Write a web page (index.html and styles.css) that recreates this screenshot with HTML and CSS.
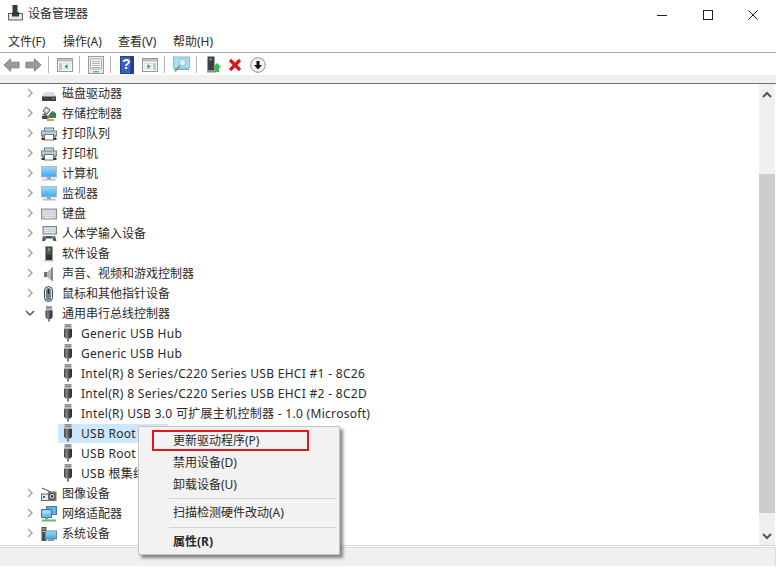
FILE: index.html
```html
<!DOCTYPE html>
<html lang="zh-CN">
<head>
<meta charset="utf-8">
<title>设备管理器</title>
<link rel="stylesheet" href="styles.css">
</head>
<body>
<svg class="defs" width="0" height="0" aria-hidden="true">
  <defs>
    <linearGradient id="plug-g" x1="0" x2="1" y1="0" y2="0"><stop offset="0" stop-color="#3d3d3d"/><stop offset=".35" stop-color="#8c8c8c"/><stop offset=".6" stop-color="#4a4a4a"/><stop offset="1" stop-color="#2f2f2f"/></linearGradient>
    <linearGradient id="screen-g" x1="0" x2="0" y1="0" y2="1"><stop offset="0" stop-color="#9fdcfb"/><stop offset="1" stop-color="#3fa4ea"/></linearGradient>
    <symbol id="chev" viewBox="0 0 10 10"><path d="M3 1l4 4-4 4" fill="none" stroke="#a6a6a6" stroke-width="1.5"/></symbol>
    <symbol id="chevd" viewBox="0 0 10 10"><path d="M1 3l4 4 4-4" fill="none" stroke="#555" stroke-width="1.5"/></symbol>
    <symbol id="usb" viewBox="0 0 10 18"><rect x="2" y="0.500" width="6" height="4.500" fill="#c9c9c9" stroke="#777" stroke-width=".7"/><rect x="3.300" y="1.500" width="1.200" height="1.500" fill="#444"/><rect x="5.500" y="1.500" width="1.200" height="1.500" fill="#444"/><path d="M1 5h8v7.500L7.500 14.500h-5L1 12.500z" fill="url(#plug-g)"/><rect x="4" y="14.500" width="2" height="3" fill="#777"/></symbol>
    <symbol id="disk" viewBox="0 0 16 16"><path d="M3.500 6h9l2.500 4v5H1v-5z" fill="#dcdcdc"/><rect x="1" y="10.500" width="14" height="4.500" fill="#3f3f3f"/><rect x="11.500" y="12" width="2" height="1.200" fill="#5fd15f"/></symbol>
    <symbol id="storage" viewBox="0 0 16 16"><path d="M5 1l4 3-3 4-4-3z" fill="#ddd" stroke="#555"/><path d="M1 8l5 5 8-3V6l-3-1-4 5-3-3z" fill="#5b7d63"/><rect x="9" y="7" width="6" height="5" fill="#3f7d4e"/><rect x="6" y="13" width="7" height="2" fill="#c9a227"/><rect x="1" y="10" width="5" height="3" fill="#444"/></symbol>
    <symbol id="printer" viewBox="0 0 16 16"><rect x="3.500" y="2" width="9" height="3.500" fill="#bfe0f7" stroke="#4f7fa3"/><rect x="0.500" y="5" width="15" height="5" fill="#c4c8cb" stroke="#7d8488"/><rect x="1" y="9" width="14" height="3.500" fill="#8e9397"/><rect x="3.500" y="8.500" width="9" height="5.500" fill="#fff" stroke="#777"/><rect x="0.500" y="12" width="3" height="2" fill="#333"/><rect x="12.500" y="12" width="3" height="2" fill="#333"/></symbol>
    <symbol id="monitor" viewBox="0 0 16 16"><rect x="0.500" y="0.500" width="15" height="10.500" fill="url(#screen-g)" stroke="#a9bcc9"/><rect x="6" y="11" width="4" height="2" fill="#9aa5ad"/><rect x="1.500" y="13" width="13" height="1.500" fill="#b5bdc3"/></symbol>
    <symbol id="keyboard" viewBox="0 0 16 16"><rect x="0.500" y="3" width="15" height="10" fill="#c9cfd4" stroke="#8b9298"/><path d="M2 5.500h12M2 7.500h12M2 9.500h12" stroke="#eef1f3" stroke-width="1" stroke-dasharray="1 .6"/><rect x="4" y="11" width="8" height="1" fill="#f2f2f2"/></symbol>
    <symbol id="hid" viewBox="0 0 16 16"><rect x="2" y="0.500" width="13.500" height="7.500" fill="#c9cfd4" stroke="#7c8288"/><path d="M3 2.500h11M3 4.500h11M3 6.500h11" stroke="#f1f3f5" stroke-dasharray="1 .6"/><path d="M1 15l1-5h12l1.500 5h-3l-1-2.500H5L4 15z" fill="#4d5359"/><circle cx="4" cy="11" r="1" fill="#7fa6c9"/><circle cx="12" cy="11" r="1" fill="#7fa6c9"/></symbol>
    <symbol id="soft" viewBox="0 0 16 16"><rect x="4.500" y="0.500" width="7" height="13.500" fill="#333"/><rect x="5.500" y="1.500" width="5" height="7" fill="#5a5a5a"/><rect x="7" y="2.500" width="2" height="2" fill="#4fd84f"/><rect x="3.500" y="14" width="9" height="1.500" fill="#bbb"/></symbol>
    <symbol id="sound" viewBox="0 0 16 16"><path d="M3 6h3v5H3z" fill="#6c7479"/><path d="M6 6l6-5v15l-6-5z" fill="#b1b8bd"/><path d="M10 2.500l2-1.500v14l-2-1.500z" fill="#7f878c"/></symbol>
    <symbol id="mouse" viewBox="0 0 16 16"><rect x="3.500" y="0.500" width="8" height="15" rx="4" fill="#e7e9eb" stroke="#3e4347"/><rect x="5" y="2" width="5" height="12.500" rx="2.500" fill="#6f8296"/><rect x="6.800" y="3" width="1.400" height="5" rx=".7" fill="#23282d"/></symbol>
    <symbol id="camera" viewBox="0 0 16 16"><path d="M1 2l9 4" stroke="#444"/><rect x="0.500" y="8" width="7" height="6.500" fill="#e9e9e9" stroke="#666"/><rect x="7" y="5.500" width="8.500" height="9.500" fill="#777"/><circle cx="11.200" cy="10.300" r="3" fill="#ddd" stroke="#333"/><circle cx="11.200" cy="10.300" r="1.200" fill="#333"/><rect x="2" y="10" width="2" height="2" fill="#555"/></symbol>
    <symbol id="net" viewBox="0 0 16 16"><rect x="5.500" y="0.500" width="10" height="8" fill="#5db3e8" stroke="#4a7c9e"/><rect x="0.500" y="3.500" width="10" height="8" fill="#6cc0ee" stroke="#4a7c9e"/><rect x="1.500" y="4.500" width="8" height="3" fill="#a5dcf8"/><path d="M5.500 11.500v2" stroke="#47b04c" stroke-width="2.500"/><rect x="1" y="13.500" width="14" height="2" fill="#5bc25f"/></symbol>
    <symbol id="sys" viewBox="0 0 16 16"><rect x="0.500" y="1" width="5" height="14" fill="#4a4f53"/><rect x="1.500" y="2.500" width="3" height="1" fill="#c6c6c6"/><rect x="1.500" y="5" width="3" height="1" fill="#c6c6c6"/><rect x="4.500" y="5" width="11" height="8" fill="url(#screen-g)" stroke="#6d8ba0"/><rect x="7" y="13" width="6" height="2" fill="#8f989e"/></symbol>
    <symbol id="back" viewBox="0 0 18 16"><path d="M1 8l7-6.500V5h9v6H8v3.500z" fill="#9a9a9a" stroke="#808080"/></symbol>
    <symbol id="fwd" viewBox="0 0 18 16"><path d="M17 8l-7-6.500V5H1v6h9v3.500z" fill="#9a9a9a" stroke="#808080"/></symbol>
    <symbol id="pane-l" viewBox="0 0 16 16"><rect x="0.500" y="1.500" width="15" height="13" fill="#f4f4f4" stroke="#9a9a9a"/><rect x="1" y="2" width="14" height="2.500" fill="#bfbfbf"/><path d="M2 6h3v7H2z" fill="#c7c7c7"/><path d="M6 6.500h8M6 9h8M6 11.500h8" stroke="#ddd"/><path d="M10.500 7v5L7.500 9.500z" fill="#35a045"/></symbol>
    <symbol id="pane-r" viewBox="0 0 16 16"><rect x="0.500" y="1.500" width="15" height="13" fill="#f4f4f4" stroke="#9a9a9a"/><rect x="1" y="2" width="14" height="2.500" fill="#bfbfbf"/><path d="M11 6h3v7h-3z" fill="#c7c7c7"/><path d="M2 6.500h8M2 9h8M2 11.500h8" stroke="#ddd"/><path d="M5.500 7v5l3-2.500z" fill="#35a045"/></symbol>
    <symbol id="prop" viewBox="0 0 16 18"><rect x="0.500" y="0.500" width="15" height="17" fill="#ececec" stroke="#9a9a9a"/><rect x="2.500" y="3" width="11" height="10" fill="#fff" stroke="#aaa"/><path d="M4 5.500h8M4 7.500h8M4 9.500h8M4 11.500h8" stroke="#aaa"/><rect x="5" y="15" width="6" height="1.500" fill="#49b0d8"/></symbol>
    <symbol id="help" viewBox="0 0 14 18"><rect x="0.500" y="0.500" width="13" height="17" fill="#3b5fc4" stroke="#26408f"/><rect x="10.500" y="1" width="3" height="16" fill="#233b8a"/></symbol>
    <symbol id="scan" viewBox="0 0 17 17"><rect x="0.500" y="0.500" width="16" height="11" fill="#a9ddf7" stroke="#86bcd9"/><rect x="1" y="12" width="15" height="1.500" fill="#54b7e2"/><circle cx="9.500" cy="6" r="3.500" fill="#d9f1fb" stroke="#9fb4c2"/><path d="M7 9l-5 6" stroke="#8f8a7e" stroke-width="1.500"/></symbol>
    <symbol id="update" viewBox="0 0 15 18"><rect x="0.500" y="0.500" width="7" height="14" fill="#3d3d3d"/><rect x="2.500" y="2.500" width="2" height="2" fill="#4fd84f"/><rect x="0" y="14.500" width="9" height="2" fill="#888"/><path d="M10 7l4.500 4.500H12V16H8v-4.500H5.500z" fill="#2fbf55"/></symbol>
    <symbol id="remove" viewBox="0 0 14 14"><path d="M2 2l10 10M12 2L2 12" stroke="#d9141b" stroke-width="3.200"/></symbol>
    <symbol id="down" viewBox="0 0 16 16"><circle cx="8" cy="8" r="7.300" fill="#f4f4f4" stroke="#8d8d8d"/><path d="M8 12.500L4 8h2.500V4h3v4H12z" fill="#111"/></symbol>
  </defs>
</svg>

<div class="window">
  <header class="titlebar">
    <svg class="title-icon" viewBox="0 0 15 16"><path d="M4.500 0h5v7h-5z" fill="#3a3a3a"/><path d="M0.500 8.500h14v6.500H.5z" fill="#e6e6e6" stroke="#5a5a5a"/><path d="M4 7h7v4.500H4z" fill="#3a3a3a"/></svg>
    <span class="title-text">设备管理器</span>
    <div class="controls">
      <span class="ctl"><svg width="12" height="12" viewBox="0 0 12 12"><path d="M1 6.500h10" stroke="#222"/></svg></span>
      <span class="ctl"><svg width="12" height="12" viewBox="0 0 12 12"><rect x="1.500" y="1.500" width="9" height="9" fill="none" stroke="#222"/></svg></span>
      <span class="ctl"><svg width="12" height="12" viewBox="0 0 12 12"><path d="M1.500 1.500l9 9M10.500 1.500l-9 9" stroke="#222"/></svg></span>
    </div>
  </header>

  <nav class="menubar">
    <span class="menu-item">文件(F)</span>
    <span class="menu-item">操作(A)</span>
    <span class="menu-item">查看(V)</span>
    <span class="menu-item">帮助(H)</span>
  </nav>

  <div class="toolbar">
    <svg class="tb w17"><use href="#back"/></svg>
    <svg class="tb w17 g5"><use href="#fwd"/></svg>
    <i class="sep"></i>
    <svg class="tb w16"><use href="#pane-l"/></svg>
    <i class="sep"></i>
    <svg class="tb w16"><use href="#prop"/></svg>
    <i class="sep"></i>
    <span class="help-wrap"><svg class="tb w14"><use href="#help"/></svg><b class="help-q">?</b></span>
    <svg class="tb w16 g8"><use href="#pane-r"/></svg>
    <i class="sep"></i>
    <svg class="tb w17"><use href="#scan"/></svg>
    <i class="sep"></i>
    <svg class="tb w15 g2"><use href="#update"/></svg>
    <svg class="tb w14 g6"><use href="#remove"/></svg>
    <svg class="tb w16 g8"><use href="#down"/></svg>
  </div>
  <div class="band"></div>

  <main class="main">
    <div class="tree">
      <div class="row"><svg class="chev"><use href="#chev"/></svg><svg class="ico"><use href="#disk"/></svg><span>磁盘驱动器</span></div>
      <div class="row"><svg class="chev"><use href="#chev"/></svg><svg class="ico"><use href="#storage"/></svg><span>存储控制器</span></div>
      <div class="row"><svg class="chev"><use href="#chev"/></svg><svg class="ico"><use href="#printer"/></svg><span>打印队列</span></div>
      <div class="row"><svg class="chev"><use href="#chev"/></svg><svg class="ico"><use href="#printer"/></svg><span>打印机</span></div>
      <div class="row"><svg class="chev"><use href="#chev"/></svg><svg class="ico"><use href="#monitor"/></svg><span>计算机</span></div>
      <div class="row"><svg class="chev"><use href="#chev"/></svg><svg class="ico"><use href="#monitor"/></svg><span>监视器</span></div>
      <div class="row"><svg class="chev"><use href="#chev"/></svg><svg class="ico"><use href="#keyboard"/></svg><span>键盘</span></div>
      <div class="row"><svg class="chev"><use href="#chev"/></svg><svg class="ico"><use href="#hid"/></svg><span>人体学输入设备</span></div>
      <div class="row"><svg class="chev"><use href="#chev"/></svg><svg class="ico"><use href="#soft"/></svg><span>软件设备</span></div>
      <div class="row"><svg class="chev"><use href="#chev"/></svg><svg class="ico"><use href="#sound"/></svg><span>声音、视频和游戏控制器</span></div>
      <div class="row"><svg class="chev"><use href="#chev"/></svg><svg class="ico"><use href="#mouse"/></svg><span>鼠标和其他指针设备</span></div>
      <div class="row"><svg class="chev"><use href="#chevd"/></svg><svg class="ico"><use href="#usb"/></svg><span>通用串行总线控制器</span></div>
      <div class="row child"><svg class="plug"><use href="#usb"/></svg><span>Generic USB Hub</span></div>
      <div class="row child"><svg class="plug"><use href="#usb"/></svg><span>Generic USB Hub</span></div>
      <div class="row child"><svg class="plug"><use href="#usb"/></svg><span>Intel(R) 8 Series/C220 Series USB EHCI #1 - 8C26</span></div>
      <div class="row child"><svg class="plug"><use href="#usb"/></svg><span>Intel(R) 8 Series/C220 Series USB EHCI #2 - 8C2D</span></div>
      <div class="row child"><svg class="plug"><use href="#usb"/></svg><span>Intel(R) USB 3.0 可扩展主机控制器 - 1.0 (Microsoft)</span></div>
      <div class="row child selected"><svg class="plug"><use href="#usb"/></svg><span>USB Root Hub (USB 3.0)</span></div>
      <div class="row child"><svg class="plug"><use href="#usb"/></svg><span>USB Root Hub</span></div>
      <div class="row child"><svg class="plug"><use href="#usb"/></svg><span>USB 根集线器</span></div>
      <div class="row"><svg class="chev"><use href="#chev"/></svg><svg class="ico"><use href="#camera"/></svg><span>图像设备</span></div>
      <div class="row"><svg class="chev"><use href="#chev"/></svg><svg class="ico"><use href="#net"/></svg><span>网络适配器</span></div>
      <div class="row"><svg class="chev"><use href="#chev"/></svg><svg class="ico"><use href="#sys"/></svg><span>系统设备</span></div>
    </div>
    <div class="scrollbar">
      <svg class="arrow" viewBox="0 0 10 8"><path d="M1 6l4-4 4 4" fill="none" stroke="#555" stroke-width="2"/></svg>
      <div class="track"><div class="thumb"></div></div>
      <svg class="arrow" viewBox="0 0 10 8"><path d="M1 2l4 4 4-4" fill="none" stroke="#555" stroke-width="2"/></svg>
    </div>
  </main>
  <div class="status"></div>
</div>

<div class="ctx">
  <div class="ctx-item">更新驱动程序(P)</div>
  <div class="ctx-item">禁用设备(D)</div>
  <div class="ctx-item">卸载设备(U)</div>
  <div class="ctx-sep"></div>
  <div class="ctx-item">扫描检测硬件改动(A)</div>
  <div class="ctx-sep second"></div>
  <div class="ctx-item strong">属性(R)</div>
  <div class="redbox"></div>
</div>
</body>
</html>
```

FILE: styles.css
```css
* { box-sizing: border-box; }
html, body { margin: 0; padding: 0; background: #fff; }
body {
  position: relative;
  width: 778px;
  height: 568px;
  overflow: hidden;
  font-family: "Noto Sans", "Noto Sans CJK SC", sans-serif;
  font-size: 12px;
  color: #2a2a2a;
}
.defs { position: absolute; }
.window { display: flex; flex-direction: column; height: 566px; width: 776px; }

.titlebar { display: flex; align-items: center; height: 30px; padding: 0 0 4px 8px; flex: none; }
.title-icon { width: 15px; height: 16px; margin-right: 5px; }
.controls { display: flex; margin-left: auto; }
.ctl { display: flex; justify-content: center; width: 45.5px; padding-top: 3px; }

.menubar { display: flex; height: 22px; flex: none; padding: 0 0 0 8px; align-items: center; gap: 14px; }
.menu-item { width: 41px; white-space: nowrap; }

.toolbar { display: flex; align-items: center; height: 23px; flex: none; border-top: 1px solid #a9a9a9; padding: 1px 0 0 3px; }
.tb { height: 18px; flex: none; }
.w17 { width: 17px; }
.w16 { width: 16px; }
.w15 { width: 15px; }
.w14 { width: 14px; }
.g2 { margin-left: 2px; }
.g5 { margin-left: 5px; }
.g6 { margin-left: 6px; }
.g8 { margin-left: 8px; }
.sep { width: 1px; height: 17px; background: #b5b5b5; margin: 0 8px 0 6px; flex: none; }
.help-wrap { position: relative; display: flex; margin-left: 1px; }
.help-q { position: absolute; left: 2px; top: -1px; font: bold 14px/18px "Liberation Sans", sans-serif; color: #fff; }

.band { height: 8px; background: #f0f0f0; flex: none; }
.main { display: flex; flex: 1; min-height: 0; border-top: 1px solid #6f6f6f; border-bottom: 1px solid #d4d4d4; margin-bottom: 1px; }
.tree { flex: 1; overflow: hidden; }
.row { display: flex; align-items: center; height: 20px; padding-bottom: 2px; white-space: nowrap; }
.chev { width: 10px; height: 10px; margin: 0 6px 0 25px; flex: none; }
.ico { width: 16px; height: 16px; margin: 2px 5px 0 0; flex: none; }
.child { padding-left: 58px; }
.child span { letter-spacing: .3px; }
.plug { width: 10px; height: 18px; margin: 0 8px 0 5px; flex: none; }
.selected { background: linear-gradient(#cce8ff, #cce8ff) 58px 0 / 110px 19px no-repeat; }

.scrollbar { width: 16px; margin-right: 1px; background: #f0f0f0; display: flex; flex-direction: column; flex: none; align-items: center; }
.arrow { width: 10px; height: 8px; margin: 7px 0 5px; flex: none; }
.track { flex: 1; width: 100%; padding-top: 70px; min-height: 0; display: flex; flex-direction: column; }
.thumb { flex: 1; margin-bottom: 12px; background: #cdcdcd; }

.status { flex: none; height: 19px; background: #f0f0f0; border-top: 1px solid #d9d9d9; border-right: 1px solid #dcdcdc; }

.ctx {
  position: absolute;
  left: 138px;
  top: 426px;
  width: 202px;
  height: 129px;
  padding: 3px 2px;
  background: #f2f2f2;
  border: 1px solid #c4c4c4;
  box-shadow: 3px 3px 3px rgba(0,0,0,.45);
}
.ctx-item { height: 22px; line-height: 22px; padding-left: 32px; white-space: nowrap; }
.ctx-sep { height: 1px; margin: 2px 1px 3px 28px; background: #d2d2d2; }
.ctx-sep.second { margin-top: 3px; }
.ctx-item.strong { font-weight: 700; }
.redbox { position: absolute; left: 13px; top: 3px; width: 157px; height: 21px; border: 2px solid #e6141c; }
```
